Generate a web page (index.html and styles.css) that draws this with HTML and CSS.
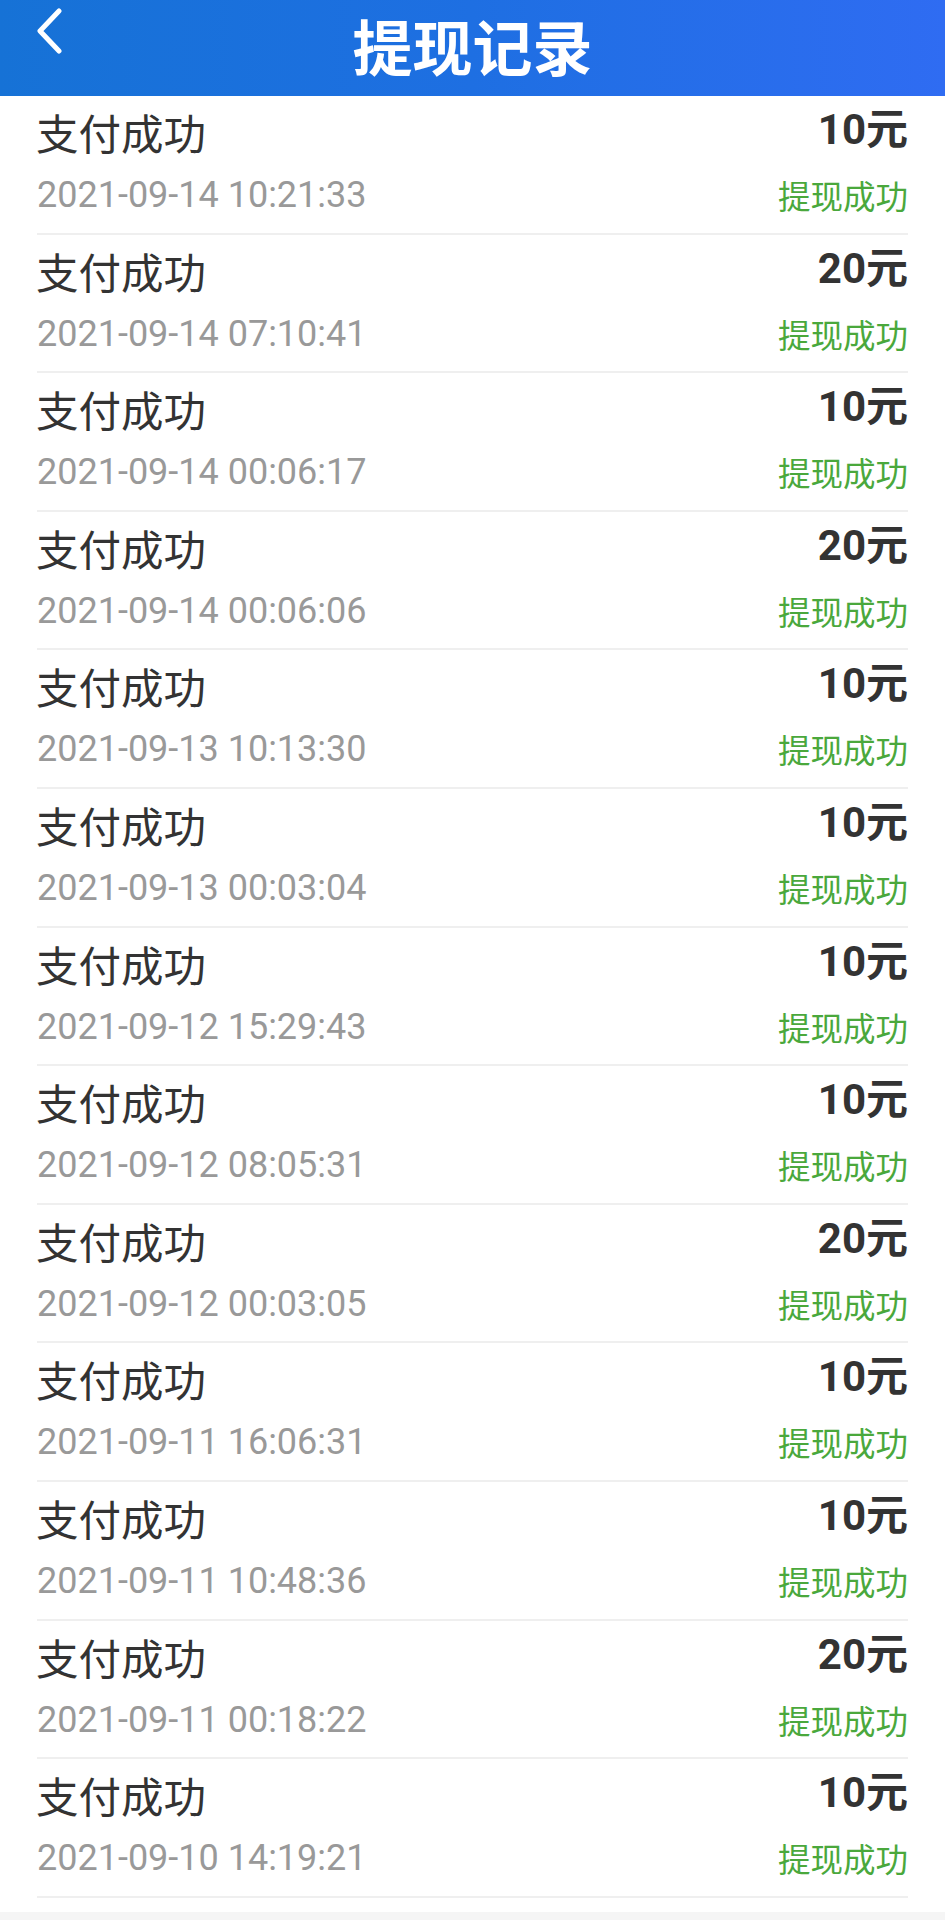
FILE: index.html
```html
<!DOCTYPE html>
<html lang="zh-CN">
<head>
<meta charset="utf-8">
<title>提现记录</title>
<link rel="stylesheet" href="styles.css">
</head>
<body>
<header class="topbar">
  <span class="back"><svg width="30" height="46" viewBox="0 0 30 46"><path d="M24 3 L5 23 L24 43" fill="none" stroke="#fff" stroke-width="5" stroke-linecap="round" stroke-linejoin="round"/></svg></span>
  <h1 class="title">提现记录</h1>
</header>
<main class="list">
  <div class="row"><div class="left"><div class="name">支付成功</div><div class="time">2021-09-14 10:21:33</div></div><div class="right"><div class="amount">10元</div><div class="status">提现成功</div></div></div>
  <div class="row"><div class="left"><div class="name">支付成功</div><div class="time">2021-09-14 07:10:41</div></div><div class="right"><div class="amount">20元</div><div class="status">提现成功</div></div></div>
  <div class="row"><div class="left"><div class="name">支付成功</div><div class="time">2021-09-14 00:06:17</div></div><div class="right"><div class="amount">10元</div><div class="status">提现成功</div></div></div>
  <div class="row"><div class="left"><div class="name">支付成功</div><div class="time">2021-09-14 00:06:06</div></div><div class="right"><div class="amount">20元</div><div class="status">提现成功</div></div></div>
  <div class="row"><div class="left"><div class="name">支付成功</div><div class="time">2021-09-13 10:13:30</div></div><div class="right"><div class="amount">10元</div><div class="status">提现成功</div></div></div>
  <div class="row"><div class="left"><div class="name">支付成功</div><div class="time">2021-09-13 00:03:04</div></div><div class="right"><div class="amount">10元</div><div class="status">提现成功</div></div></div>
  <div class="row"><div class="left"><div class="name">支付成功</div><div class="time">2021-09-12 15:29:43</div></div><div class="right"><div class="amount">10元</div><div class="status">提现成功</div></div></div>
  <div class="row"><div class="left"><div class="name">支付成功</div><div class="time">2021-09-12 08:05:31</div></div><div class="right"><div class="amount">10元</div><div class="status">提现成功</div></div></div>
  <div class="row"><div class="left"><div class="name">支付成功</div><div class="time">2021-09-12 00:03:05</div></div><div class="right"><div class="amount">20元</div><div class="status">提现成功</div></div></div>
  <div class="row"><div class="left"><div class="name">支付成功</div><div class="time">2021-09-11 16:06:31</div></div><div class="right"><div class="amount">10元</div><div class="status">提现成功</div></div></div>
  <div class="row"><div class="left"><div class="name">支付成功</div><div class="time">2021-09-11 10:48:36</div></div><div class="right"><div class="amount">10元</div><div class="status">提现成功</div></div></div>
  <div class="row"><div class="left"><div class="name">支付成功</div><div class="time">2021-09-11 00:18:22</div></div><div class="right"><div class="amount">20元</div><div class="status">提现成功</div></div></div>
  <div class="row"><div class="left"><div class="name">支付成功</div><div class="time">2021-09-10 14:19:21</div></div><div class="right"><div class="amount">10元</div><div class="status">提现成功</div></div></div>
</main>
</body>
</html>
```

FILE: styles.css
```css
html, body {
  margin: 0;
  padding: 0;
}
body {
  background: #f5f5f5;
  font-family: Roboto, "Noto Sans CJK SC", sans-serif;
  min-height: 1920px;
}
.topbar {
  height: 96px;
  background: linear-gradient(90deg, #1672d6 0%, #1e6fe2 50%, #2f6cf2 100%);
  display: flex;
  align-items: center;
  justify-content: center;
  position: relative;
}
.back {
  position: absolute;
  left: 35px;
  top: 8px;
  width: 30px;
  height: 46px;
  display: block;
}
.back svg {
  display: block;
}
.title {
  margin: 0;
  color: #fff;
  font-family: "Noto Sans CJK SC", sans-serif;
  font-weight: 700;
  font-size: 60px;
  line-height: 90px;
  margin-top: -6px;
}
.list {
  background: #fff;
  padding: 0 37px 14px 37px;
}
.row {
  height: 138.6px;
  box-sizing: border-box;
  border-bottom: 2px solid #efefef;
  display: flex;
  justify-content: space-between;
  align-items: flex-start;
}
.left, .right {
  display: flex;
  flex-direction: column;
}
.right {
  align-items: flex-end;
}
.name {
  font-family: "Noto Sans CJK SC", sans-serif;
  font-size: 42.5px;
  line-height: 60px;
  margin-top: 6px;
  color: #333;
  margin-left: -1px;
}
.time {
  font-family: Roboto, sans-serif;
  font-size: 36px;
  line-height: 44px;
  margin-top: 11px;
  color: #999;
}
.amount {
  font-family: Roboto, "Noto Sans CJK SC", sans-serif;
  font-weight: 700;
  font-size: 42px;
  line-height: 52px;
  margin-top: 8px;
  color: #333;
}
.status {
  font-family: "Noto Sans CJK SC", sans-serif;
  font-size: 32.5px;
  line-height: 44px;
  margin-top: 17px;
  color: #4aa83c;
}
```
